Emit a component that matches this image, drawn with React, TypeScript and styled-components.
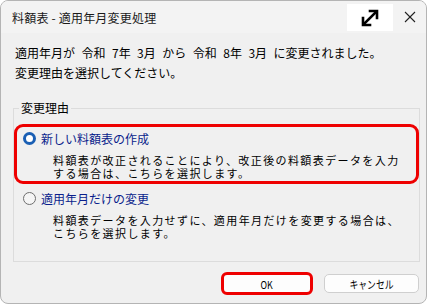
import styled, { createGlobalStyle } from "styled-components";

const Global = createGlobalStyle`
  html, body {
    margin: 0;
    padding: 0;
    background: #ffffff;
  }
  body {
    font-family: "Noto Sans CJK JP", "Noto Sans", sans-serif;
    font-size: 12px;
    color: #000;
  }
`;

const Window = styled.div`
  width: 427px;
  height: 304px;
  box-sizing: border-box;
  border: 1px solid #b4b4b4;
  border-radius: 8px;
  background: #f0f0f0;
  overflow: hidden;
  display: flex;
  flex-direction: column;
`;

const TitleBar = styled.div`
  height: 32px;
  flex: none;
  display: flex;
  align-items: center;
  background: #f3f3f3;
  padding-left: 11px;
`;

const Title = styled.div`
  flex: 1;
  font-size: 12px;
  letter-spacing: 0.2px;
  color: #1a1a1a;
  padding-top: 1px;
`;

const ExpandBox = styled.div`
  width: 46px;
  height: 27px;
  margin-top: 1px;
  background: #ffffff;
  display: flex;
  align-items: center;
  justify-content: center;
`;

const CloseBtn = styled.div`
  width: 33px;
  height: 32px;
  display: flex;
  align-items: center;
  justify-content: center;
`;

const Body = styled.div`
  flex: 1;
  display: flex;
  flex-direction: column;
  padding: 10px 0 0 12px;
`;

const Message = styled.div`
  padding-left: 2px;
  line-height: 20px;
  word-spacing: 3.8px;
  white-space: nowrap;
`;

const Group = styled.fieldset`
  margin: 18px 0 0 0;
  padding: 0;
  border: 1px solid #dcdcdc;
  border-radius: 0;
  height: 161px;
  width: 407px;
  box-sizing: border-box;
  display: flex;
  flex-direction: column;
`;

const Legend = styled.legend`
  padding: 0 2px;
  margin-left: 5px;
  line-height: 14px;
`;

const Option = styled.div<{ $highlight?: boolean }>`
  margin-top: ${(p) => (p.$highlight ? "9px" : "0")};
  width: 405px;
  height: 60px;
  box-sizing: border-box;
  border: 3px solid ${(p) => (p.$highlight ? "#ee0000" : "transparent")};
  border-radius: 9px;
  padding: 2px 0 0 6px;
`;

const RadioRow = styled.div`
  display: flex;
  align-items: center;
  gap: 5px;
  height: 18px;
`;

const Radio = styled.span<{ $checked?: boolean }>`
  width: 13px;
  height: 13px;
  box-sizing: border-box;
  border-radius: 50%;
  flex: none;
  border: ${(p) => (p.$checked ? "3.5px solid #1a5fb4" : "1px solid #6e6e6e")};
  background: ${(p) => (p.$checked ? "#ffffff" : "#f5f5f5")};
`;

const RadioLabel = styled.span`
  color: #0a1e8c;
  white-space: nowrap;
`;

const Desc = styled.div`
  margin: 7px 0 0 30px;
  font-size: 11px;
  line-height: 13px;
  letter-spacing: 1.4px;
  white-space: nowrap;
`;

const Footer = styled.div`
  display: flex;
  justify-content: flex-end;
  align-items: center;
  gap: 11px;
  padding: 10px 7px 0 0;
`;

const Button = styled.div<{ $focus?: boolean }>`
  width: ${(p) => (p.$focus ? "92px" : "95px")};
  height: ${(p) => (p.$focus ? "23px" : "19px")};
  box-sizing: border-box;
  background: #fdfdfd;
  border: ${(p) => (p.$focus ? "3px solid #ee0000" : "1px solid #cfcfcf")};
  border-radius: ${(p) => (p.$focus ? "6px" : "5px")};
  display: flex;
  align-items: center;
  justify-content: center;
`;

const ButtonText = styled.span`
  display: inline-block;
  font-size: 11px;
  transform: scaleX(0.8);
  white-space: nowrap;
`;

function ExpandIcon() {
  return (
    <svg width="26" height="22" viewBox="0 0 26 22">
      <g stroke="#000" strokeWidth="2.6" fill="none" strokeLinecap="square">
        <line x1="7" y1="17" x2="19" y2="5" />
        <polyline points="13,4 20,4 20,11" />
        <polyline points="6,11 6,18 13,18" />
      </g>
    </svg>
  );
}

function CloseIcon() {
  return (
    <svg width="12" height="12" viewBox="0 0 12 12">
      <g stroke="#222" strokeWidth="1.1">
        <line x1="1" y1="1" x2="11" y2="11" />
        <line x1="11" y1="1" x2="1" y2="11" />
      </g>
    </svg>
  );
}

export default function App() {
  return (
    <>
      <Global />
      <Window>
        <TitleBar>
          <Title>料額表 - 適用年月変更処理</Title>
          <ExpandBox>
            <ExpandIcon />
          </ExpandBox>
          <CloseBtn>
            <CloseIcon />
          </CloseBtn>
        </TitleBar>
        <Body>
          <Message>
            適用年月が 令和 7年 3月 から 令和 8年 3月 に変更されました。
            <br />
            変更理由を選択してください。
          </Message>
          <Group>
            <Legend>変更理由</Legend>
            <Option $highlight>
              <RadioRow>
                <Radio $checked />
                <RadioLabel>新しい料額表の作成</RadioLabel>
              </RadioRow>
              <Desc>
                料額表が改正されることにより、改正後の料額表データを入力
                <br />
                する場合は、こちらを選択します。
              </Desc>
            </Option>
            <Option>
              <RadioRow>
                <Radio />
                <RadioLabel>適用年月だけの変更</RadioLabel>
              </RadioRow>
              <Desc>
                料額表データを入力せずに、適用年月だけを変更する場合は、
                <br />
                こちらを選択します。
              </Desc>
            </Option>
          </Group>
          <Footer>
            <Button $focus>
              <ButtonText>OK</ButtonText>
            </Button>
            <Button>
              <ButtonText>キャンセル</ButtonText>
            </Button>
          </Footer>
        </Body>
      </Window>
    </>
  );
}
